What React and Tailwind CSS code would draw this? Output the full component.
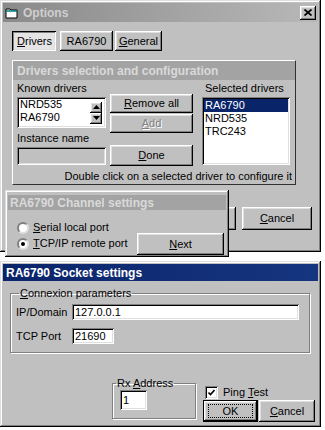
import React from "react";

// classic win95 bevels
const raised = "shadow-[inset_-1px_-1px_#000,inset_1px_1px_#fff,inset_-2px_-2px_#808080,inset_2px_2px_#dfdfdf]";
const pressed = "shadow-[inset_1px_1px_#000,inset_-1px_-1px_#fff,inset_2px_2px_#808080,inset_-2px_-2px_#dfdfdf]";
const sunken = "shadow-[inset_1px_1px_#808080,inset_-1px_-1px_#fff,inset_2px_2px_#000,inset_-2px_-2px_#dfdfdf]";
const frame = "shadow-[inset_-1px_-1px_#000,inset_1px_1px_#dfdfdf,inset_-2px_-2px_#808080,inset_2px_2px_#fff]";
const etched = "border border-[#808080] shadow-[inset_1px_1px_#fff,1px_1px_#fff]";

function Btn({ className = "", disabled, children }) {
  return (
    <div
      className={`flex items-center justify-center bg-[#c0c0c0] ${raised} ${
        disabled ? "text-[#808080] [text-shadow:1px_1px_0_#fff]" : "text-black"
      } ${className}`}
    >
      {children}
    </div>
  );
}

function Arrow({ down }) {
  return (
    <svg width="7" height="4" viewBox="0 0 7 4">
      <polygon points={down ? "0,0 7,0 3.5,4" : "0,4 7,4 3.5,0"} fill="#000" />
    </svg>
  );
}

function Radio({ checked }) {
  return (
    <div className="w-[12px] h-[12px] rounded-full bg-white border-2 border-t-[#808080] border-l-[#808080] border-b-[#dfdfdf] border-r-[#dfdfdf] flex items-center justify-center">
      {checked && <div className="w-[4px] h-[4px] rounded-full bg-black" />}
    </div>
  );
}

function WinIcon() {
  return (
    <svg width="14" height="12" viewBox="0 0 14 12">
      <path d="M1 2h4l1 1h6v8H1z" fill="#fff" stroke="#000" strokeWidth="1" />
      <path d="M1 4h11" stroke="#008080" strokeWidth="1.5" />
    </svg>
  );
}

export default function App() {
  return (
    <div className="relative w-[325px] h-[430px] bg-white font-['Liberation_Sans',Arial,sans-serif] text-[11px] text-black overflow-hidden">
      {/* ===== OPTIONS WINDOW ===== */}
      <div className={`w-[321px] h-[252px] bg-[#c0c0c0] p-[3px] flex flex-col ${frame}`}>
        <div className="h-[19px] flex items-center bg-linear-to-r from-[#8a8a8a] to-[#b8b8b8] pl-[2px]">
          <WinIcon />
          <span className="ml-[4px] font-bold text-[12px] text-[#cfcfcf]">Options</span>
          <div className={`ml-auto mr-[2px] w-[16px] h-[14px] flex items-center justify-center bg-[#c0c0c0] ${raised}`}>
            <svg width="8" height="7" viewBox="0 0 8 7">
              <path d="M0.5 0.5L7.5 6.5M7.5 0.5L0.5 6.5" stroke="#000" strokeWidth="1.7" />
            </svg>
          </div>
        </div>

        {/* tabs */}
        <div className="mt-[9px] ml-[9px] flex">
          <div className={`w-[44px] h-[20px] flex items-center justify-center pt-[1px] pl-[1px] bg-[#e4e4e4] ${pressed}`}>
            <span><u>D</u>rivers</span>
          </div>
          <Btn className="ml-[4px] w-[53px] h-[20px]">RA6790</Btn>
          <Btn className="ml-[2px] w-[47px] h-[20px]"><span><u>G</u>eneral</span></Btn>
        </div>

        {/* drivers panel */}
        <div className="mt-[9px] ml-[9px] w-[284px] h-[125px] border border-t-white border-l-white border-r-[#303030] border-b-[#303030] flex flex-col">
          <div className="h-[19px] bg-[#a3a3a3] pl-[4px] flex items-center font-bold text-[12px] text-[#d9d9d9]">
            Drivers selection and configuration
          </div>
          <div className="flex px-[4px]">
            <div className="w-[89px] flex flex-col">
              <div className="h-[16px] leading-[16px]">Known drivers</div>
              <div className={`mt-[1px] h-[31px] bg-white flex ${sunken}`}>
                <div className="flex-1 pl-[3px] pt-[1px] leading-[13px]">
                  <div>NRD535</div>
                  <div>RA6790</div>
                </div>
                <div className="flex flex-col justify-center mr-[4px]">
                  <div className={`w-[12px] h-[11px] flex items-center justify-center bg-[#c0c0c0] ${raised}`}><Arrow /></div>
                  <div className={`w-[12px] h-[11px] flex items-center justify-center bg-[#c0c0c0] ${raised}`}><Arrow down /></div>
                </div>
              </div>
              <div className="mt-[2px] h-[16px] leading-[16px]">Instance name</div>
              <div className={`mt-[1px] h-[18px] bg-[#c0c0c0] ${sunken}`} />
            </div>
            <div className="ml-[4px] w-[83px] flex flex-col">
              <Btn className="mt-[14px] h-[19px]"><span><u>R</u>emove all</span></Btn>
              <Btn disabled className="mt-[1px] h-[19px]"><span><u>A</u>dd</span></Btn>
              <Btn className="mt-[12px] h-[21px]"><span><u>D</u>one</span></Btn>
            </div>
            <div className="ml-[9px] w-[88px] flex flex-col">
              <div className="h-[16px] leading-[16px] pl-[3px]">Selected drivers</div>
              <div className={`mt-[1px] h-[68px] bg-white p-[2px] leading-[13px] ${sunken}`}>
                <div className="bg-[#0a246a] text-white pl-[1px]">RA6790</div>
                <div className="pl-[1px]">NRD535</div>
                <div className="pl-[1px]">TRC243</div>
              </div>
            </div>
          </div>
          <div className="mt-[4px] leading-[12px] text-right pr-[3px]">
            Double click on a selected driver to configure it
          </div>
        </div>

        <div className="mt-[22px] flex justify-end gap-[6px] pr-[6px]">
          <Btn className="w-[70px] h-[23px]">OK</Btn>
          <Btn className="w-[70px] h-[23px]"><span><u>C</u>ancel</span></Btn>
        </div>
      </div>

      {/* ===== CHANNEL SETTINGS (overlapping window) ===== */}
      <div className={`absolute left-[5px] top-[190px] w-[224px] h-[67px] bg-[#c0c0c0] px-[3px] pt-[5px] flex flex-col ${frame}`}>
        <div className="h-[15px] bg-[#a3a3a3] pl-[2px] flex items-center font-bold text-[12px] text-[#d9d9d9]">
          RA6790 Channel settings
        </div>
        <div className="flex flex-1">
          <div className="pl-[9px] flex flex-col">
            <div className="mt-[11px] h-[13px] flex items-center gap-[4px]">
              <Radio />
              <span><u>S</u>erial local port</span>
            </div>
            <div className="mt-[3px] h-[13px] flex items-center gap-[4px]">
              <Radio checked />
              <span><u>T</u>CP/IP remote port</span>
            </div>
          </div>
          <Btn className="ml-auto mr-[2px] mt-[23px] w-[87px] h-[22px]"><span><u>N</u>ext</span></Btn>
        </div>
      </div>

      {/* ===== SOCKET SETTINGS WINDOW ===== */}
      <div className={`mt-[9px] w-[321px] h-[166px] bg-[#c0c0c0] p-[3px] flex flex-col ${frame}`}>
        <div className="h-[17px] bg-linear-to-r from-[#0a246a] to-[#163580] pl-[3px] flex items-center font-bold text-[12px] text-white">
          RA6790 Socket settings
        </div>
        <fieldset className={`mt-[6px] ml-[7px] w-[300px] pb-[8px] ${etched}`}>
          <legend className="ml-[8px] px-[1px] leading-[12px]"><u>C</u>onnexion parameters</legend>
          <div className="mt-[5px] flex items-center h-[16px] pl-[5px]">
            <span className="w-[56px]">IP/Domain</span>
            <div className={`w-[227px] h-[16px] bg-white pl-[3px] leading-[16px] ${sunken}`}>127.0.0.1</div>
          </div>
          <div className="mt-[8px] flex items-center h-[16px] pl-[5px]">
            <span className="w-[56px]">TCP Port</span>
            <div className={`w-[42px] h-[16px] bg-white pl-[3px] leading-[16px] ${sunken}`}>21690</div>
          </div>
        </fieldset>

        <div className="mt-auto flex justify-end items-end pr-[3px]">
          <fieldset className={`mb-[5px] w-[84px] h-[42px] ${etched}`}>
            <legend className="ml-[3px] px-[1px] leading-[12px]">Rx <u>A</u>ddress</legend>
            <div className={`mt-[1px] ml-[7px] w-[27px] h-[20px] bg-white pl-[3px] leading-[20px] ${sunken}`}>1</div>
          </fieldset>
          <div className="ml-[7px] w-[112px] flex flex-col mb-[2px]">
            <div className="flex items-center h-[14px] pl-[2px]">
              <div className={`w-[13px] h-[13px] bg-white flex items-center justify-center ${sunken}`}>
                <svg width="7" height="7" viewBox="0 0 7 7">
                  <path d="M0.5 3.5L2.5 5.5L6.5 1" stroke="#000" strokeWidth="1.6" fill="none" />
                </svg>
              </div>
              <span className="ml-[5px]">Ping <u>T</u>est</span>
            </div>
            <div className="mt-[1px] flex">
              <div className="w-[55px] h-[22px] border border-black">
                <Btn className="w-full h-full">
                  <span className="w-[45px] h-[14px] border border-dotted border-black flex items-center justify-center">OK</span>
                </Btn>
              </div>
              <Btn className="ml-[1px] w-[56px] h-[22px]"><span><u>C</u>ancel</span></Btn>
            </div>
          </div>
        </div>
      </div>
    </div>
  );
}
